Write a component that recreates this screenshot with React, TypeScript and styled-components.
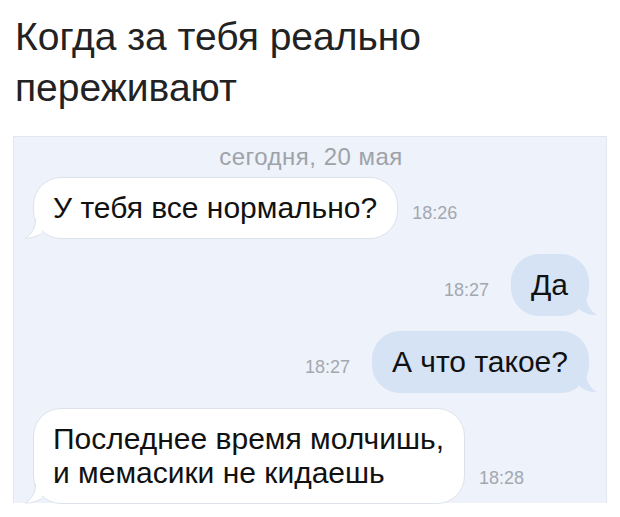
import styled, { createGlobalStyle } from "styled-components"

const Global = createGlobalStyle`
    body {
        margin: 0;
        background: #fff;
        font-family: "Liberation Sans", Arial, sans-serif;
    }
`

const Page = styled.div`
    width: 620px;
    height: 517px;
    overflow: hidden;
    padding-top: 11px;
    box-sizing: border-box;
`

const Title = styled.h1`
    margin: 0 0 23px 15px;
    font-size: 39px;
    line-height: 51px;
    font-weight: 400;
    color: #222;
`

const Chat = styled.div`
    margin-left: 13px;
    width: 594px;
    height: 367px;
    box-sizing: border-box;
    background: #eef2fa;
    border: 1px solid #e2e6ee;
    border-bottom: none;
    padding: 8px 17px 0 19px;
    display: flex;
    flex-direction: column;
    gap: 15px;
`

const DateLabel = styled.div`
    text-align: center;
    font-size: 24px;
    line-height: 24px;
    letter-spacing: 0.5px;
    color: #9ea2a9;
    margin-bottom: -7px;
`

const Row = styled.div<{ $out?: boolean }>`
    display: flex;
    align-items: flex-end;
    justify-content: ${({ $out }) => ($out ? "flex-end" : "flex-start")};
    gap: ${({ $out }) => ($out ? "22px" : "14px")};
`

const Time = styled.span`
    font-size: 18px;
    line-height: 20px;
    color: #a3a8b0;
    margin-bottom: 16px;
`

const Bubble = styled.div<{ $out?: boolean }>`
    position: relative;
    padding: 13px 20px 13px 19px;
    font-size: 30px;
    line-height: 34px;
    color: #111;
    border-radius: 28px;
    background: ${({ $out }) => ($out ? "#d6e3f5" : "#fff")};
    border: 1px solid ${({ $out }) => ($out ? "#d6e3f5" : "#dde2ea")};
`

const Tail = styled.svg<{ $out?: boolean }>`
    position: absolute;
    bottom: -1px;
    width: 20px;
    height: 22px;
    ${({ $out }) => ($out ? "right: -10px; transform: scaleX(-1);" : "left: -10px;")}
`

const BubbleTail = ({ out }: { out?: boolean }) => (
    <Tail $out={out} viewBox="0 0 20 22">
        <path
            d="M12 0 C12 10 8 17 1 21 C7 21.5 13 19.5 18 16 L18 0 Z"
            fill={out ? "#d6e3f5" : "#fff"}
        />
        {!out && (
            <path
                d="M11.5 2 C11.5 11 7.5 17.5 1 21 C7 21.5 13 19.5 17.5 16.5"
                fill="none"
                stroke="#dde2ea"
                strokeWidth="1"
            />
        )}
    </Tail>
)

const Message = ({
    out,
    time,
    children,
}: {
    out?: boolean
    time: string
    children: React.ReactNode
}) => (
    <Row $out={out}>
        {out && <Time>{time}</Time>}
        <Bubble $out={out}>
            <BubbleTail out={out} />
            {children}
        </Bubble>
        {!out && <Time>{time}</Time>}
    </Row>
)

const App = () => {
    return (
        <Page>
            <Global />
            <Title>
                Когда за тебя реально
                <br />
                переживают
            </Title>
            <Chat>
                <DateLabel>сегодня, 20 мая</DateLabel>
                <Message time="18:26">У тебя все нормально?</Message>
                <Message out time="18:27">
                    Да
                </Message>
                <Message out time="18:27">
                    А что такое?
                </Message>
                <Message time="18:28">
                    Последнее время молчишь,
                    <br />
                    и мемасики не кидаешь
                </Message>
            </Chat>
        </Page>
    )
}

export default App
